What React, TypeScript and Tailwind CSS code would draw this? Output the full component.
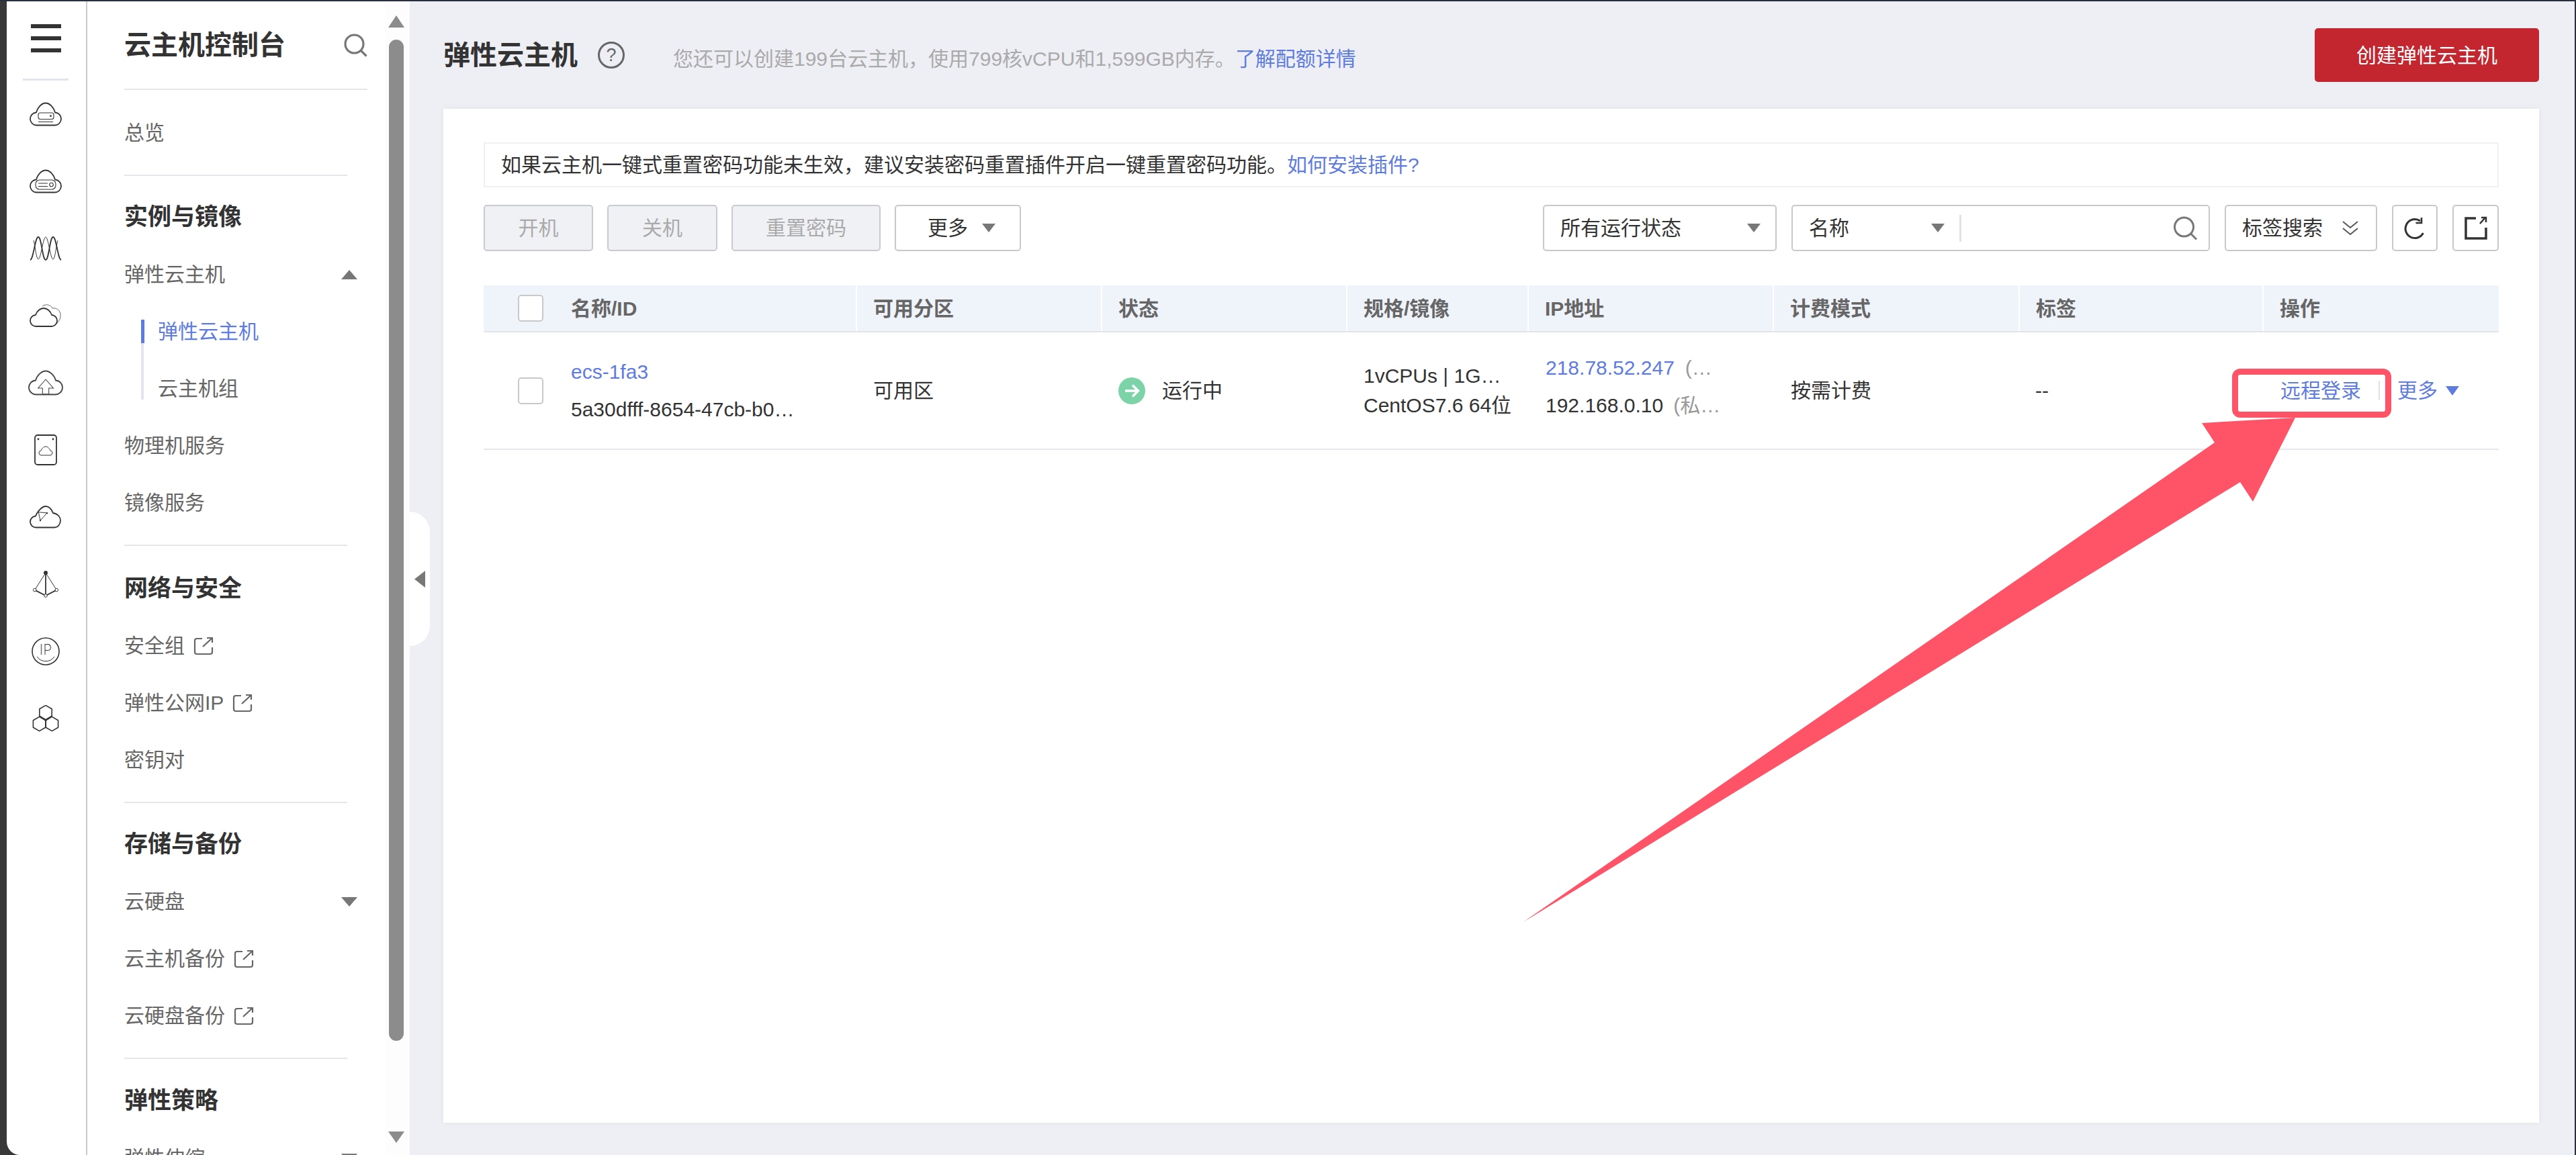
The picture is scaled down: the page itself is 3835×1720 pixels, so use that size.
const cloudPath = 'M11 36.5 a9.5 9.5 0 0 1 -1 -19 C12 10 18 3.5 24 3.5 C30 3.5 36 10 38 17.5 a9.5 9.5 0 0 1 -1 19 Z';

function hexPoints(cx: number, cy: number, r: number) {
  return [0, 1, 2, 3, 4, 5]
    .map((i) => {
      const a = (Math.PI / 3) * i - Math.PI / 2;
      return `${(cx + r * Math.cos(a)).toFixed(1)},${(cy + r * Math.sin(a)).toFixed(1)}`;
    })
    .join(' ');
}

const railIcons = [
  <svg key="1" width="48" height="40" viewBox="0 0 48 40" fill="none" stroke="#333">
    <path d={cloudPath} strokeWidth="1.8" />
    <rect x="13" y="18" width="23" height="9.5" rx="3" strokeWidth="1.1" />
    <circle cx="31.5" cy="22.7" r="1.4" fill="#333" stroke="none" />
    <path d="M13 31.5H35" strokeWidth="1.1" />
  </svg>,
  <svg key="2" width="48" height="40" viewBox="0 0 48 40" fill="none" stroke="#333">
    <path d={cloudPath} strokeWidth="1.8" />
    <rect x="9" y="18" width="30" height="14" rx="6" strokeWidth="1.1" />
    <path d="M13 23H27M13 27.5H27" strokeWidth="1.1" />
    <circle cx="32.5" cy="25" r="2.8" strokeWidth="1.1" />
  </svg>,
  <svg key="3" width="48" height="40" viewBox="0 0 48 40" fill="none" stroke="#333">
    <path d="M1 37 C6 36 8 3 13 3 C18 3 19 37 24 37 C29 37 30 3 35 3 C40 3 42 36 47 37" strokeWidth="1.8" />
    <path d="M6 8 C8 14 10 36 13 36 C17 36 20 3 24 3 C28 3 31 36 35 36 C38 36 40 14 42 8" strokeWidth="1" />
  </svg>,
  <svg key="4" width="48" height="40" viewBox="0 0 48 40" fill="none" stroke="#333">
    <path d="M19 6 C24 2 32 4 34 9 C42 8 47 14 46 21 C46 25 44 28 41 31" strokeWidth="1" stroke="#666" />
    <path d="M10 36 a8.5 8.5 0 0 1 -1 -17 C11 13 16 9 21 9 C26 9 31 13 33 19 a8.5 8.5 0 0 1 -1 17 Z" strokeWidth="1.8" fill="#fff" />
  </svg>,
  <svg key="5" width="52" height="40" viewBox="0 0 52 40" fill="none" stroke="#444">
    <path d="M12 37.5 a10.5 10.5 0 0 1 -1 -21 C13 9 20 2.5 26 2.5 C32 2.5 39 9 41 16.5 a10.5 10.5 0 0 1 -1 21 Z" strokeWidth="1.8" />
    <path d="M26 15 L14.7 28 H21.3 V37 H30.7 V28 H37.4 Z" strokeWidth="1.1" />
  </svg>,
  <svg key="6" width="48" height="48" viewBox="0 0 48 48" fill="none" stroke="#333">
    <rect x="8" y="2" width="32" height="44" rx="4" strokeWidth="1.8" />
    <circle cx="13" cy="8" r="1.4" fill="#333" stroke="none" />
    <circle cx="35" cy="8" r="1.4" fill="#333" stroke="none" />
    <path d="M18 32 a3.5 3.5 0 0 1 -1 -7 C18 22 21 19 24 19 C27 19 30 22 31 25 a3.5 3.5 0 0 1 -1 7 Z" strokeWidth="1" />
  </svg>,
  <svg key="7" width="48" height="40" viewBox="0 0 48 40" fill="none" stroke="#333">
    <path d="M10 35.5 a8.5 8.5 0 0 1 -1 -17 C11 13 18 4 24 4 C30 4 33 9 35 14 C42 15 46 20 46 25 C46 31 42 35.5 37 35.5 Z" strokeWidth="1.8" />
    <path d="M13.3 12.6 L26 14 L16 25 Z" strokeWidth="1" />
    <circle cx="26" cy="14" r="1.2" fill="#333" stroke="none" />
    <circle cx="16" cy="25" r="1.2" fill="#333" stroke="none" />
  </svg>,
  <svg key="8" width="40" height="40" viewBox="0 0 40 40" fill="none" stroke="#333">
    <path d="M20 3V37" strokeWidth="1.8" />
    <path d="M20 3L3.7 28.6M20 3L36.3 28.6" strokeWidth="1" />
    <path d="M3.7 28.6L20 37L36.3 28.6" strokeWidth="1.8" />
    <circle cx="20" cy="3" r="3" fill="#333" stroke="none" />
    <circle cx="20" cy="37" r="2.3" fill="#fff" strokeWidth="1" />
    <circle cx="3.7" cy="28.6" r="2.3" fill="#fff" strokeWidth="1" />
    <circle cx="36.3" cy="28.6" r="2.3" fill="#fff" strokeWidth="1" />
  </svg>,
  <svg key="9" width="44" height="44" viewBox="0 0 44 44" fill="none" stroke="#333">
    <circle cx="22" cy="22" r="20" strokeWidth="1.6" />
    <text x="22" y="27" textAnchor="middle" fontSize="21" fill="#333" stroke="none" className="font-['Inter'] font-extralight">
      IP
    </text>
    <path d="M9 30 A16 16 0 0 0 35 30" strokeWidth="1" />
  </svg>,
  <svg key="10" width="40" height="40" viewBox="0 0 40 40" fill="none" stroke="#333" strokeWidth="1.6" strokeLinejoin="round">
    <polygon points={hexPoints(20, 11, 10.6)} />
    <polygon points={hexPoints(10.6, 28, 10.6)} />
    <polygon points={hexPoints(29.4, 28, 10.6)} />
    <circle cx="20" cy="22.5" r="1.5" fill="#333" stroke="none" />
  </svg>,
];

function Caret({ up = false, w = 20, h = 13, color = '#777' }: { up?: boolean; w?: number; h?: number; color?: string }) {
  return (
    <svg width={w} height={h} viewBox="0 0 20 13" preserveAspectRatio="none" className="shrink-0">
      <polygon points={up ? '0,13 20,13 10,0' : '0,0 20,0 10,13'} fill={color} />
    </svg>
  );
}

function ExtIcon() {
  return (
    <svg width="30" height="28" viewBox="0 0 30 28" fill="none" stroke="#666" strokeWidth="2.2" className="ml-[13px]">
      <path d="M13 3H5a3 3 0 0 0-3 3V23a3 3 0 0 0 3 3H25a3 3 0 0 0 3-3V16" />
      <path d="M14 15L28 2M20 2H28V9" />
    </svg>
  );
}

function NavItem({ label, ext, caret }: { label: string; ext?: boolean; caret?: 'up' | 'down' }) {
  return (
    <div className="flex h-[85px] w-[347px] items-center justify-between">
      <div className="flex items-center">
        <span>{label}</span>
        {ext && <ExtIcon />}
      </div>
      {caret && <Caret up={caret === 'up'} w={24} h={14} />}
    </div>
  );
}

function NavHeading({ label }: { label: string }) {
  return <div className="flex h-[85px] items-center text-[35px] font-bold text-[#333]">{label}</div>;
}

function Sidebar() {
  return (
    <div className="flex h-full w-[480px] shrink-0">
      <div className="w-[443px] overflow-hidden pl-[55px] pr-[26px] text-[30px] text-[#666]">
        <div className="flex h-[132px] items-center justify-between border-b-2 border-[#e5e6ec]">
          <span className="text-[40px] font-bold text-[#333]">云主机控制台</span>
          <svg width="35" height="35" viewBox="0 0 35 35" fill="none" stroke="#777" strokeWidth="3.2">
            <circle cx="15.5" cy="15.5" r="13.5" />
            <path d="M25 25L33.5 33.5" />
          </svg>
        </div>
        <div className="w-[332px] border-b-2 border-[#e5e6ec] pb-[20px] pt-[21px]">
          <NavItem label="总览" />
        </div>
        <div className="w-[332px] border-b-2 border-[#e5e6ec] pb-[20px] pt-[19px]">
          <NavHeading label="实例与镜像" />
          <NavItem label="弹性云主机" caret="up" />
          <div className="ml-[25px] flex">
            <div className="flex w-[5px] flex-col pb-[26px] pt-[25px]">
              <div className="h-[35px] w-[5px] bg-[#5e7ce0]" />
              <div className="w-[4px] flex-1 bg-[#e2e5ee]" />
            </div>
            <div className="pl-[20px]">
              <div className="flex h-[85px] items-center text-[#5e7ce0]">弹性云主机</div>
              <div className="flex h-[85px] items-center">云主机组</div>
            </div>
          </div>
          <NavItem label="物理机服务" />
          <NavItem label="镜像服务" />
        </div>
        <div className="w-[332px] border-b-2 border-[#e5e6ec] pb-[20px] pt-[21px]">
          <NavHeading label="网络与安全" />
          <NavItem label="安全组" ext />
          <NavItem label="弹性公网IP" ext />
          <NavItem label="密钥对" />
        </div>
        <div className="w-[332px] border-b-2 border-[#e5e6ec] pb-[20px] pt-[19px]">
          <NavHeading label="存储与备份" />
          <NavItem label="云硬盘" caret="down" />
          <NavItem label="云主机备份" ext />
          <NavItem label="云硬盘备份" ext />
        </div>
        <div className="w-[332px] pt-[20px]">
          <NavHeading label="弹性策略" />
          <NavItem label="弹性伸缩" caret="down" />
        </div>
      </div>
      <div className="flex w-[37px] flex-col items-center bg-[#fdfdfd]">
        <div className="mr-[4px] mt-[21px] flex h-[36px] items-start">
          <Caret up w={24} h={18} color="#8c8c8c" />
        </div>
        <div className="mr-[4px] h-[1491px] w-[22px] rounded-[11px] bg-[#8c8c8c]" />
        <div className="mr-[4px] mt-[135px]">
          <Caret w={24} h={17} color="#8c8c8c" />
        </div>
      </div>
    </div>
  );
}

function ToolButton({ label, w, disabled }: { label: string; w: string; disabled?: boolean }) {
  return (
    <div
      className={
        disabled
          ? `flex h-[69px] items-center justify-center rounded-[5px] border-2 border-[#c8cad0] bg-[#f0f1f5] text-[#aaa] ${w}`
          : `flex h-[69px] items-center justify-center rounded-[5px] border-2 border-[#c8c8cc] bg-white text-[#333] ${w}`
      }
    >
      {label}
    </div>
  );
}

const headers = ['名称/ID', '可用分区', '状态', '规格/镜像', 'IP地址', '计费模式', '标签', '操作'];
const tableCols = 'grid grid-cols-[554px_365px_365px_270px_365px_366px_363px_352px]';

export default function App() {
  return (
    <div className="relative h-[1720px] w-[3835px] overflow-hidden border-r-2 border-t-2 border-[#2a2f3f] bg-[#383838] pl-[10px] font-['Liberation_Sans','Noto_Sans_CJK_SC',sans-serif]">
      <div className="flex h-full overflow-hidden rounded-bl-[20px] bg-white">
        {/* icon rail */}
        <div className="flex h-full w-[120px] shrink-0 flex-col items-center border-r-2 border-[#c8c9cc] pr-[2px]">
          <div className="flex h-[115px] flex-col gap-[12px] pt-[34px]">
            <div className="h-[6px] w-[45px] bg-[#333]" />
            <div className="h-[6px] w-[45px] bg-[#333]" />
            <div className="h-[6px] w-[45px] bg-[#333]" />
          </div>
          <div className="h-[3px] w-[68px] bg-[#e2e4ee]" />
          {railIcons.map((icon, i) => (
            <div key={i} className="flex h-[100px] items-center justify-center">
              {icon}
            </div>
          ))}
        </div>

        <Sidebar />

        {/* main */}
        <div className="relative min-w-0 flex-1 bg-[#eeeff5] pl-[50px] pr-[53px] text-[30px]">
          <div className="absolute left-0 top-[760px] flex h-[200px] w-[30px] items-center rounded-r-[30px] bg-white pl-[7px]">
            <svg width="16" height="25" viewBox="0 0 16 25">
              <polygon points="16,0 16,25 0,12.5" fill="#777" />
            </svg>
          </div>

          <div className="flex h-[160px] items-center justify-between">
            <div className="flex items-center">
              <span className="text-[40px] font-bold text-[#333]">弹性云主机</span>
              <div className="ml-[30px] flex h-[40px] w-[40px] items-center justify-center rounded-full border-[3px] border-[#666] text-[27px] text-[#666]">
                ?
              </div>
              <span className="ml-[72px] mt-[10px] text-[#aaa]">
                您还可以创建199台云主机，使用799核vCPU和1,599GB内存。
                <span className="text-[#5e7ce0]">了解配额详情</span>
              </span>
            </div>
            <div className="flex h-[80px] w-[334px] items-center justify-center rounded-[5px] bg-[#c4262f] text-white">
              创建弹性云主机
            </div>
          </div>

          <div className="h-[1510px] bg-white px-[60px] pt-[50px] shadow-[0_0_10px_rgba(0,0,0,0.05)]">
            <div className="flex h-[67px] items-center border-2 border-[#f0f0f2] pl-[24px] text-[#333]">
              如果云主机一键式重置密码功能未生效，建议安装密码重置插件开启一键重置密码功能。
              <span className="text-[#5e7ce0]">如何安装插件?</span>
            </div>

            <div className="mb-[51px] mt-[26px] flex h-[69px] justify-between text-[#333]">
              <div className="flex gap-[21px]">
                <ToolButton label="开机" w="w-[163px]" disabled />
                <ToolButton label="关机" w="w-[164px]" disabled />
                <ToolButton label="重置密码" w="w-[222px]" disabled />
                <div className="flex h-[69px] w-[188px] items-center gap-[21px] rounded-[5px] border-2 border-[#c8c8cc] bg-white pl-[47px]">
                  <span>更多</span>
                  <Caret />
                </div>
              </div>
              <div className="flex gap-[22px]">
                <div className="flex h-[69px] w-[348px] items-center justify-between rounded-[5px] border-2 border-[#c8c8cc] pl-[24px] pr-[22px]">
                  <span>所有运行状态</span>
                  <Caret />
                </div>
                <div className="flex h-[69px] w-[623px] items-center rounded-[5px] border-2 border-[#c8c8cc] pl-[24px] pr-[16px]">
                  <span className="w-[182px]">名称</span>
                  <Caret />
                  <div className="ml-[22px] h-[40px] w-[3px] bg-[#e0e2e8]" />
                  <div className="flex-1" />
                  <svg width="37" height="36" viewBox="0 0 37 36" fill="none" stroke="#777" strokeWidth="3">
                    <circle cx="16.5" cy="16" r="14" />
                    <path d="M26.5 26L35 34.5" />
                  </svg>
                </div>
                <div className="flex h-[69px] w-[227px] items-center rounded-[5px] border-2 border-[#c8c8cc] pl-[24px]">
                  <span className="w-[149px]">标签搜索</span>
                  <svg width="24" height="22" viewBox="0 0 24 22" fill="none" stroke="#555" strokeWidth="2">
                    <path d="M1 1L12 10L23 1M1 11L12 20L23 11" />
                  </svg>
                </div>
                <div className="flex h-[69px] w-[68px] items-center justify-center rounded-[5px] border-2 border-[#c8c8cc]">
                  <svg width="34" height="34" viewBox="0 0 34 34" fill="none" stroke="#333" strokeWidth="3">
                    <path d="M25 6A14 14 0 1 0 29.5 24" />
                    <path d="M27 1V9H18.5" strokeWidth="2.6" />
                  </svg>
                </div>
                <div className="flex h-[69px] w-[69px] items-center justify-center rounded-[5px] border-2 border-[#c8c8cc]">
                  <svg width="36" height="36" viewBox="0 0 36 36" fill="none" stroke="#333" strokeWidth="3.5">
                    <path d="M18 3H3V33H33V17" />
                    <path d="M24 11L32 2" strokeWidth="2.5" />
                    <path d="M26 2H33V9" strokeWidth="2.5" />
                  </svg>
                </div>
              </div>
            </div>

            {/* table */}
            <div className={`${tableCols} h-[70px] border-b-2 border-[#e2e4ea] bg-[#eff3fa] font-bold text-[#666]`}>
              {headers.map((h, i) => (
                <div key={h} className={i === 0 ? 'flex items-center pl-[51px]' : 'flex items-center border-l-2 border-white pl-[24px]'}>
                  {i === 0 && <div className="mr-[41px] h-[40px] w-[38px] rounded-[5px] border-2 border-[#c8c8cc] bg-white" />}
                  <span>{h}</span>
                </div>
              ))}
            </div>
            <div className={`${tableCols} h-[175px] items-center border-b-2 border-[#e6e7ec] text-[#333]`}>
              <div className="flex items-center pl-[51px]">
                <div className="mr-[41px] h-[40px] w-[38px] rounded-[5px] border-2 border-[#c8c8cc] bg-white" />
                <div className="leading-[56px]">
                  <div className="text-[#5e7ce0]">ecs-1fa3</div>
                  <div>5a30dfff-8654-47cb-b0…</div>
                </div>
              </div>
              <div className="pl-[26px]">可用区</div>
              <div className="flex items-center pl-[26px]">
                <svg width="40" height="40" viewBox="0 0 40 40" fill="none">
                  <circle cx="20" cy="20" r="20" fill="#7dd3a8" />
                  <path d="M10 20H29M21 11.5L29.5 20L21 28.5" stroke="#fff" strokeWidth="3.4" />
                </svg>
                <span className="ml-[25px]">运行中</span>
              </div>
              <div className="pl-[26px] leading-[44px]">
                <div>1vCPUs | 1G…</div>
                <div>CentOS7.6 64位</div>
              </div>
              <div className="pb-[12px] pl-[27px] leading-[56px]">
                <div>
                  <span className="text-[#5e7ce0]">218.78.52.247</span>
                  <span className="ml-[16px] text-[#999]">(…</span>
                </div>
                <div>
                  <span>192.168.0.10</span>
                  <span className="ml-[15px] text-[#999]">(私…</span>
                </div>
              </div>
              <div className="pl-[27px]">按需计费</div>
              <div className="pl-[25px]">--</div>
              <div className="flex items-center pl-[27px] text-[#5e7ce0]">
                <span>远程登录</span>
                <div className="mx-[26px] h-[29px] w-[2px] bg-[#dfe1e6]" />
                <span>更多</span>
                <span className="ml-[12px]">
                  <Caret color="#5e7ce0" h={14} />
                </span>
              </div>
            </div>
          </div>
        </div>
      </div>

      {/* annotation drawn over the console */}
      <div className="absolute left-[3323px] top-[547px] h-[73px] w-[237px] rounded-[12px] border-[9px] border-[#ff5468]" />
      <svg className="pointer-events-none absolute left-0 top-[-2px]" width="3835" height="1720" viewBox="0 0 3835 1720">
        <polygon points="2268,1373 3297,659 3278,630 3417,622 3354,747 3335,718" fill="#ff5468" />
      </svg>
    </div>
  );
}
